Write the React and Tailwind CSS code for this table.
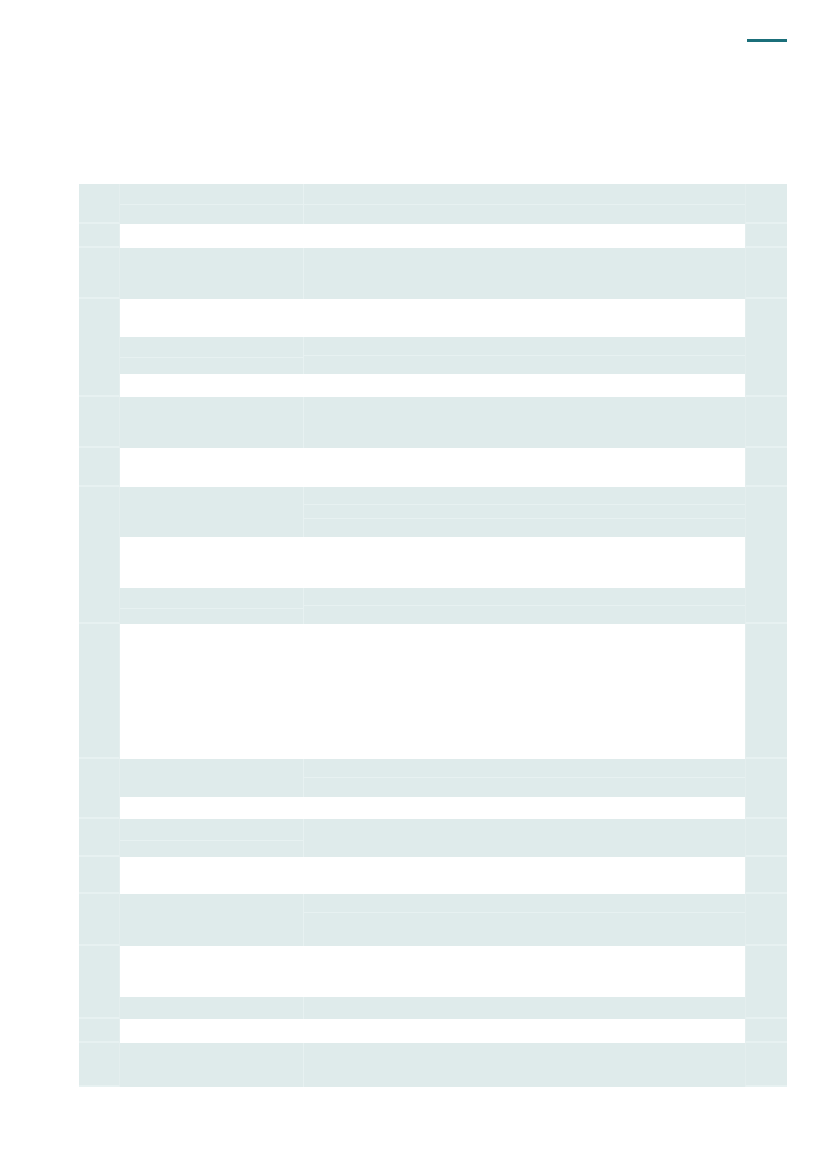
import React from "react";

// each group: height, and middle rows (w = white, c = colored with col2/col3 sub-row heights)
const groups = [
  { h: 40, rows: [{ t: "c", a: [21, 19], b: [21, 19] }] },
  { h: 24, rows: [{ t: "w", h: 24 }] },
  { h: 51, rows: [{ t: "c", a: [51], b: [51] }] },
  {
    h: 98,
    rows: [
      { t: "w", h: 38 },
      { t: "c", a: [21, 16], b: [19, 18] },
      { t: "w", h: 23 },
    ],
  },
  { h: 51, rows: [{ t: "c", a: [51], b: [51] }] },
  { h: 39, rows: [{ t: "w", h: 39 }] },
  {
    h: 137,
    rows: [
      { t: "c", a: [50], b: [18, 14, 18] },
      { t: "w", h: 51 },
      { t: "c", a: [21, 15], b: [18, 18] },
    ],
  },
  { h: 135, rows: [{ t: "w", h: 135 }] },
  {
    h: 60,
    rows: [
      { t: "c", a: [38], b: [19, 19] },
      { t: "w", h: 22 },
    ],
  },
  { h: 38, rows: [{ t: "c", a: [22, 16], b: [38] }] },
  { h: 37, rows: [{ t: "w", h: 37 }] },
  { h: 52, rows: [{ t: "c", a: [52], b: [19, 33] }] },
  {
    h: 73,
    rows: [
      { t: "w", h: 51 },
      { t: "c", a: [22], b: [22] },
    ],
  },
  { h: 24, rows: [{ t: "w", h: 24 }] },
  { h: 44, rows: [{ t: "c", a: [44], b: [44] }] },
];

function Stack({ heights, className }) {
  return (
    <div className={className + " flex flex-col"}>
      {heights.map((h, i) => (
        <div
          key={i}
          className={
            "bg-[#dfebeb] " + (i < heights.length - 1 ? "border-b border-[#e7f1f1]" : "")
          }
          style={{ height: h }}
        />
      ))}
    </div>
  );
}

function Side({ h, left }) {
  return (
    <div
      className={
        "bg-[#dfebeb] border-b-2 border-[#e7f1f1] " +
        (left ? "w-[41px] border-r border-r-[#e4eeee]" : "w-[42px] border-l border-l-[#e4eeee]")
      }
      style={{ height: h }}
    />
  );
}

export default function App() {
  return (
    <div className="min-h-[1169px] w-[827px] bg-white relative">
      {/* header accent */}
      <div className="flex justify-end pr-[40px] pt-[39px]">
        <div className="h-[3px] w-[40px] bg-[#1b6f7a]" />
      </div>

      <div className="ml-[79px] mt-[142px] w-[708px] flex flex-col">
        {groups.map((g, gi) => (
          <div key={gi} className="flex">
            <Side h={g.h} left />
            <div className="w-[625px] flex flex-col">
              {g.rows.map((r, ri) =>
                r.t === "w" ? (
                  <div key={ri} className="bg-white" style={{ height: r.h }} />
                ) : (
                  <div key={ri} className="flex">
                    <Stack heights={r.a} className="w-[184px] border-r border-[#e7f1f1]" />
                    <Stack heights={r.b} className="flex-1" />
                  </div>
                )
              )}
            </div>
            <Side h={g.h} />
          </div>
        ))}
      </div>
    </div>
  );
}
